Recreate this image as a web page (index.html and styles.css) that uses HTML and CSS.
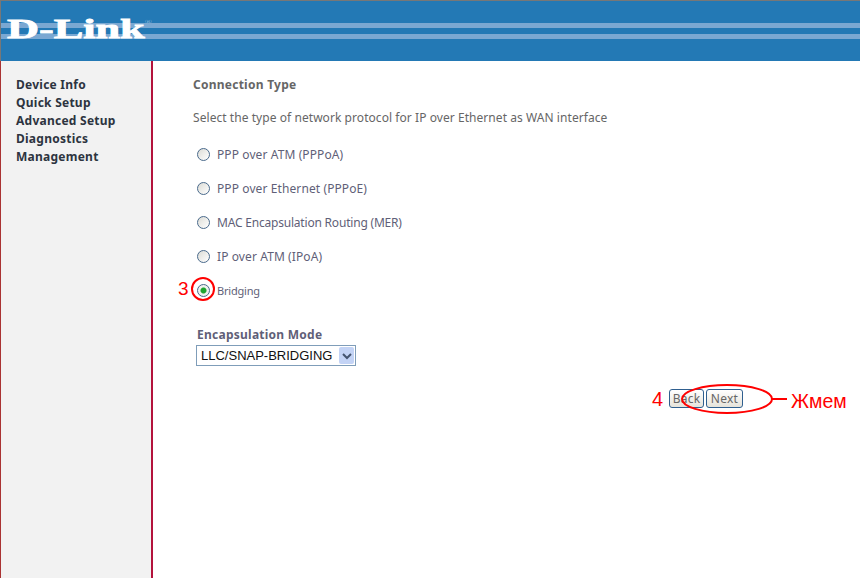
FILE: index.html
```html
<!DOCTYPE html>
<html lang="en">
<head>
    <meta charset="UTF-8">
    <meta name="viewport" content="width=device-width, initial-scale=1.0">
    <title>D-Link</title>
    <link rel="stylesheet" href="styles.css">
</head>
<body>
    <header class="banner">
        <span class="logo">D-Link<sup class="reg">®</sup></span>
    </header>
    <div class="page">
        <nav class="sidebar">
            <a>Device Info</a>
            <a>Quick Setup</a>
            <a>Advanced Setup</a>
            <a>Diagnostics</a>
            <a>Management</a>
        </nav>
        <main class="content">
            <h1 class="title">Connection Type</h1>
            <p class="intro">Select the type of network protocol for IP over Ethernet as WAN interface</p>
            <ul class="options">
                <li><span class="radio"></span>PPP over ATM (PPPoA)</li>
                <li><span class="radio"></span>PPP over Ethernet (PPPoE)</li>
                <li class="tight"><span class="radio"></span>MAC Encapsulation Routing (MER)</li>
                <li><span class="radio"></span>IP over ATM (IPoA)</li>
                <li class="bridging">
                    <span class="mark-num mark-three">3</span>
                    <span class="radio checked"></span>Bridging
                    <svg class="ring" width="26" height="26" viewBox="0 0 26 26"><ellipse cx="13" cy="13" rx="11" ry="11" fill="none" stroke="#f00" stroke-width="2"/></svg>
                </li>
            </ul>
            <div class="encap">
                <div class="encap-label">Encapsulation Mode</div>
                <div class="select">
                    <span class="select-text">LLC/SNAP-BRIDGING</span>
                    <span class="select-btn">
                        <svg width="10" height="8" viewBox="0 0 10 8"><path d="M1 2 L5 6 L9 2" fill="none" stroke="#44546f" stroke-width="2"/></svg>
                    </span>
                </div>
            </div>
            <div class="actions">
                <span class="mark-num mark-four">4</span>
                <button class="btn">Back</button>
                <button class="btn">Next</button>
                <svg class="next-ring" width="150" height="36" viewBox="0 0 150 36">
                    <ellipse cx="47" cy="18" rx="45" ry="14" fill="none" stroke="#f00" stroke-width="2"/>
                    <path d="M92 18 H107" stroke="#f00" stroke-width="2"/>
                </svg>
                <span class="press">Жмем</span>
            </div>
        </main>
    </div>
</body>
</html>
```
FILE: styles.css
```css
/* Global */
html, body {
    height: 100%;
}

body {
    margin: 0;
    background: #fff;
    font-family: "Noto Sans", sans-serif;
    font-size: 12px;
    letter-spacing: 0.25px;
    color: #666;
    overflow: hidden;
}

/* Banner */
.banner {
    box-sizing: border-box;
    height: 61px;
    padding: 13px 0 0 6px;
    border-top: 1px solid #777;
    border-left: 1px solid #777;
    background:
        linear-gradient(#7aa8d2, #7aa8d2) 0 22px / 100% 5px no-repeat,
        linear-gradient(#7aa8d2, #7aa8d2) 0 33px / 100% 5px no-repeat,
        #2379b5;
}

.logo {
    display: inline-block;
    font-family: "Liberation Serif", serif;
    font-size: 28px;
    font-weight: bold;
    line-height: 30px;
    letter-spacing: 0;
    color: #fff;
    -webkit-text-stroke: 0.8px #fff;
    transform: scaleX(1.58);
    transform-origin: left center;
}

.reg {
    font-size: 6px;
    font-weight: normal;
    line-height: 0;
    -webkit-text-stroke: 0;
    color: #9dbfdc;
    vertical-align: 14px;
}

/* Layout */
.page {
    display: flex;
    height: 517px;
}

.sidebar {
    box-sizing: border-box;
    width: 153px;
    padding: 15px 0 0 15px;
    display: flex;
    flex-direction: column;
    background: #f2f2f2;
    border-left: 1px solid #a33;
    border-right: 2px solid #b3123c;
}

.sidebar a {
    height: 18px;
    line-height: 18px;
    font-weight: bold;
    color: #2d3440;
}

.content {
    flex: 1;
    padding: 16px 0 0 40px;
    position: relative;
}

.title {
    margin: 0;
    font-size: 12px;
    line-height: 16px;
    font-weight: bold;
    color: #666;
}

.intro {
    margin: 17px 0 0;
    line-height: 16px;
    letter-spacing: 0.06px;
}

/* Radios */
.options {
    list-style: none;
    margin: 11px 0 0 4px;
    padding: 0;
}

.options li {
    display: flex;
    align-items: center;
    height: 34px;
    letter-spacing: 0.1px;
    color: #5f5f78;
}

.options li.tight {
    letter-spacing: -0.2px;
}

.options li.bridging {
    position: relative;
    font-size: 11px;
    letter-spacing: -0.2px;
}

.radio {
    box-sizing: border-box;
    width: 13px;
    height: 13px;
    margin-right: 7px;
    border: 1.5px solid #4a6a8c;
    border-radius: 50%;
    background: linear-gradient(135deg, #dcdcd6, #fff);
}

.radio.checked {
    background: radial-gradient(circle, #1fa52f 0 2.5px, #eef2ee 3.5px);
}

.ring {
    position: absolute;
    left: -7px;
    top: 3px;
}

.mark-num {
    position: absolute;
    font-family: "Liberation Sans", sans-serif;
    font-size: 19px;
    letter-spacing: 0;
    color: #f00;
}

.mark-three {
    left: -19px;
    top: 5px;
}

/* Encapsulation */
.encap {
    margin: 20px 0 0 4px;
}

.encap-label {
    font-weight: bold;
    line-height: 16px;
    color: #5f5f78;
}

.select {
    box-sizing: border-box;
    display: flex;
    align-items: center;
    justify-content: space-between;
    width: 160px;
    height: 21px;
    margin: 2px 0 0 -1px;
    padding: 0 1px 0 4px;
    border: 1px solid #7f9db9;
}

.select-text {
    font-family: "Liberation Sans", sans-serif;
    font-size: 13px;
    letter-spacing: 0;
    white-space: nowrap;
    color: #111;
}

.select-btn {
    display: flex;
    align-items: center;
    justify-content: center;
    width: 15px;
    height: 17px;
    background: #c3d3f5;
    border-radius: 2px;
}

/* Buttons */
.actions {
    display: flex;
    gap: 2px;
    position: absolute;
    left: 516px;
    top: 328px;
}

.btn {
    box-sizing: border-box;
    height: 19px;
    width: 35px;
    padding: 0;
    font-family: inherit;
    font-size: 12px;
    letter-spacing: 0.25px;
    color: #666;
    background: linear-gradient(#fff, #e6e3da);
    border: 1px solid #2f5f8f;
    border-radius: 3px;
}

.btn + .btn {
    width: 37px;
}

.mark-four {
    left: -17px;
    top: -1px;
    font-size: 20px;
}

.next-ring {
    position: absolute;
    left: 11px;
    top: -8px;
}

.press {
    position: absolute;
    left: 122px;
    top: 1px;
    font-family: "Liberation Sans", sans-serif;
    font-size: 19.5px;
    letter-spacing: 0;
    color: #f00;
}
```
